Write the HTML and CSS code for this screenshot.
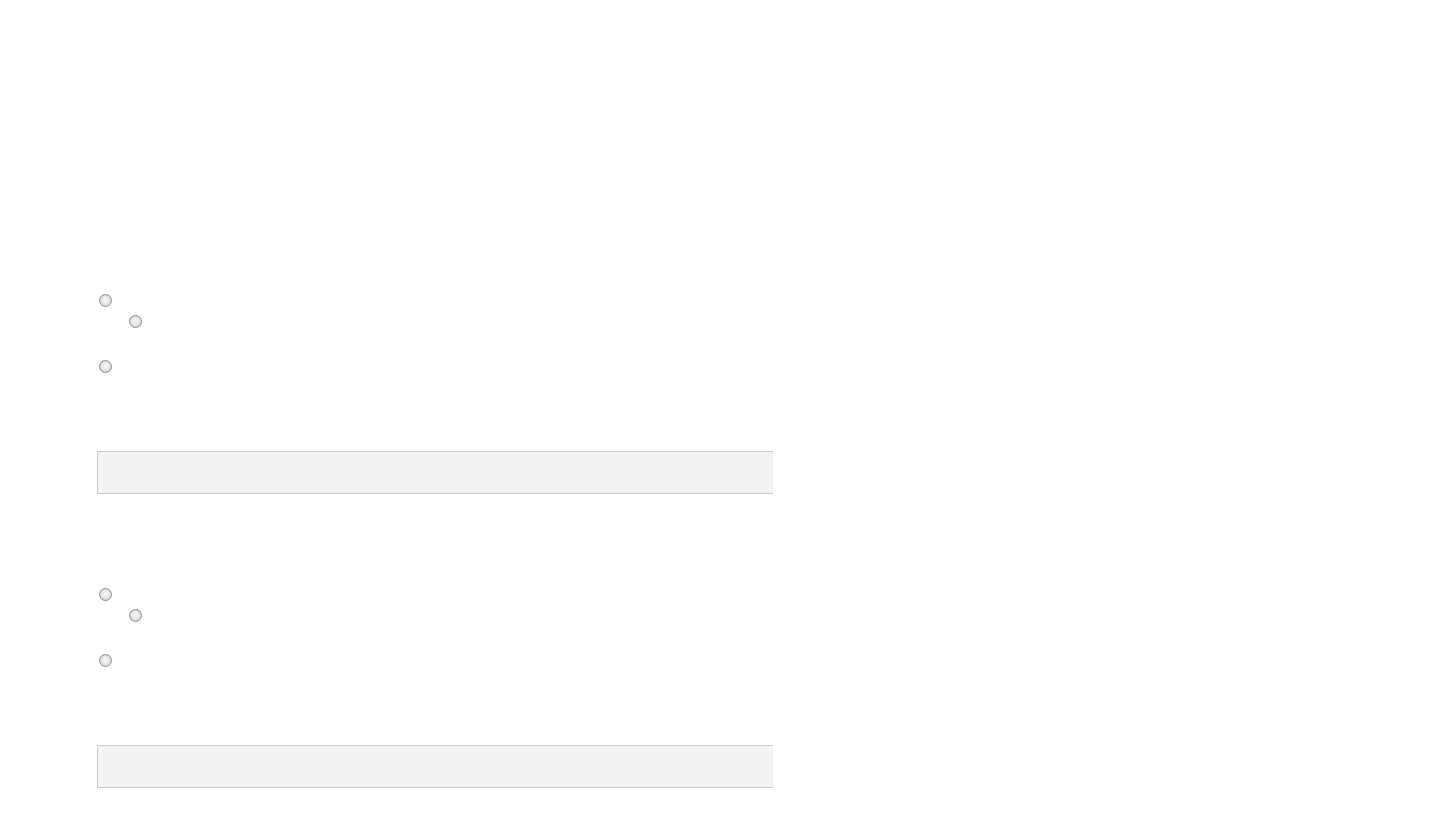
FILE: index.html
```html
<!DOCTYPE html>
<html>
<head>
<meta charset="utf-8">
<link rel="stylesheet" href="styles.css">
</head>
<body>
<div class="page">
  <section class="group">
    <ul class="options">
      <li class="opt"><span class="radio"></span></li>
      <li class="opt sub"><span class="radio"></span></li>
      <li class="opt last"><span class="radio"></span></li>
    </ul>
    <div class="panel"></div>
  </section>
  <section class="group">
    <ul class="options">
      <li class="opt"><span class="radio"></span></li>
      <li class="opt sub"><span class="radio"></span></li>
      <li class="opt last"><span class="radio"></span></li>
    </ul>
    <div class="panel"></div>
  </section>
</div>
</body>
</html>
```

FILE: styles.css
```css
html, body {
  margin: 0;
  padding: 0;
  background: #ffffff;
  font-family: "Liberation Sans", Arial, sans-serif;
}
.page {
  padding: 294px 0 0 97px;
  display: flex;
  flex-direction: column;
  gap: 94px;
}
.group {
  display: flex;
  flex-direction: column;
}
.options {
  list-style: none;
  margin: 0;
  padding: 0 0 0 2px;
  display: flex;
  flex-direction: column;
}
.opt {
  height: 13px;
  display: flex;
}
.opt.sub {
  margin-top: 8px;
  padding-left: 30px;
}
.opt.last {
  margin-top: 32px;
}
.radio {
  display: block;
  width: 13px;
  height: 13px;
  box-sizing: border-box;
  border-radius: 50%;
  border: 1px solid #8e8e8e;
  background: radial-gradient(circle at 50% 45%, #f6f6f6 0%, #e8e8e8 45%, #cbcbcb 80%, #b8b8b8 100%);
  box-shadow: inset 0 0 0 1px #dcdcdc;
}
.panel {
  margin-top: 78px;
  width: 676px;
  height: 43px;
  box-sizing: border-box;
  background: #f3f3f3;
  border: 1px solid #cccccc;
  border-right: none;
}
```
